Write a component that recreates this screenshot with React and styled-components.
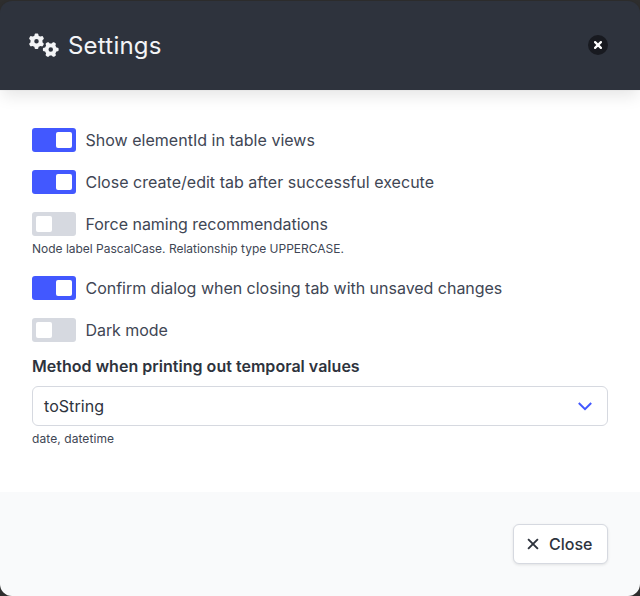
import React, { useState } from "react";
import styled, { createGlobalStyle } from "styled-components";
import { FaGears } from "react-icons/fa6";

const GlobalStyle = createGlobalStyle`
  *, *::before, *::after { box-sizing: border-box; }
  html { background: #2e2e2e; }
  body { margin: 0; font: 400 16px/24px Inter, sans-serif; color: #404654; }
  button { font: inherit; cursor: pointer; }
`;

const Dialog = styled.section`
  display: flex;
  flex-direction: column;
  width: 640px;
  height: 596px;
  padding-top: 1px;
  overflow: hidden;
`;

const Header = styled.header`
  display: flex;
  align-items: center;
  flex: 0 0 89px;
  padding: 0 32px 1px 29px;
  background: #2e333d;
  color: #f3f4f6;
  border-radius: 12px 12px 0 0;
  box-shadow: 0 8px 16px -2px rgba(10, 10, 10, 0.1), 0 0 0 1px rgba(10, 10, 10, 0.02);
  z-index: 1;
`;

const TitleIcon = styled.span`
  display: flex;
  margin-right: 9px;
  svg { width: 30px; height: 24px; }
`;

const Title = styled.h1`
  flex: 1;
  margin: 0;
  padding-top: 1px;
  font-size: 24px;
  font-weight: 400;
  line-height: 24px;
  letter-spacing: 0.22px;
`;

const Dismiss = styled.button`
  display: flex;
  align-items: center;
  justify-content: center;
  width: 20px;
  height: 20px;
  padding: 0;
  border: 0;
  border-radius: 50%;
  background: #181a20;
  color: #fff;
  svg { width: 8px; height: 8px; }
`;

const Body = styled.main`
  flex: 0 0 402px;
  padding: 38px 32px 0;
  background: #fff;
`;

const Option = styled.label`
  display: flex;
  align-items: center;
  gap: 9.5px;
  height: 24px;
  margin-bottom: ${(p) => (p.$tight ? "0" : "18px")};
  cursor: pointer;
`;

const Track = styled.button`
  display: flex;
  justify-content: ${(p) => (p.$on ? "flex-end" : "flex-start")};
  width: 44px;
  height: 24px;
  padding: 4px;
  border: 0;
  border-radius: 3px;
  background: ${(p) => (p.$on ? "#4258ff" : "#d6d9e0")};
`;

const Thumb = styled.span`
  width: 16px;
  height: 16px;
  border-radius: 2px;
  background: #fff;
`;

const OptionText = styled.span`
  letter-spacing: ${(p) => p.$spacing || "normal"};
`;

const Help = styled.p`
  margin: ${(p) => p.$margin};
  font-size: 12px;
  line-height: 18px;
  letter-spacing: ${(p) => p.$spacing || "normal"};
`;

const FieldLabel = styled.label`
  display: block;
  margin: -6px 0 8px;
  font-weight: 600;
  letter-spacing: 0.025px;
  color: #2e333d;
`;

const Select = styled.div`
  display: flex;
  align-items: center;
  justify-content: space-between;
  height: 40px;
  padding: 0 14px 0 11px;
  border: 1px solid #d6d9e0;
  border-radius: 6px;
  color: #2e333d;
`;

const Footer = styled.footer`
  display: flex;
  flex: 1;
  align-items: flex-start;
  justify-content: flex-end;
  padding: 32px;
  background: #f9fafb;
  border-radius: 0 0 12px 12px;
`;

const CloseButton = styled.button`
  display: flex;
  align-items: center;
  width: 95px;
  height: 40px;
  padding: 0 0 0 11px;
  border: 1px solid #d6d9e0;
  border-radius: 6px;
  background: #fff;
  color: #2e333d;
  font-weight: 500;
  box-shadow: 0 1px 3px rgba(10, 10, 10, 0.1);
  svg { width: 16px; height: 16px; margin-right: 8px; }
`;

const options = [
  { label: "Show elementId in table views", on: true, spacing: "0.02px" },
  { label: "Close create/edit tab after successful execute", on: true, spacing: "0.025px" },
  {
    label: "Force naming recommendations",
    on: false,
    spacing: "-0.03px",
    help: "Node label PascalCase. Relationship type UPPERCASE.",
  },
  {
    label: "Confirm dialog when closing tab with unsaved changes",
    on: true,
    spacing: "-0.025px",
  },
  { label: "Dark mode", on: false, spacing: "-0.06px" },
];

function Toggle({ label, on, help, spacing }) {
  const [active, setActive] = useState(on);
  return (
    <>
      <Option $tight={Boolean(help)}>
        <Track
          type="button"
          role="switch"
          aria-checked={active}
          $on={active}
          onClick={() => setActive(!active)}
        >
          <Thumb />
        </Track>
        <OptionText $spacing={spacing}>{label}</OptionText>
      </Option>
      {help && <Help $margin="4px 0 18px" $spacing="-0.015px">{help}</Help>}
    </>
  );
}

export default function App() {
  return (
    <>
      <GlobalStyle />
      <Dialog role="dialog">
        <Header>
          <TitleIcon><FaGears /></TitleIcon>
          <Title>Settings</Title>
          <Dismiss aria-label="close">
            <svg viewBox="0 0 8 8" fill="none" stroke="currentColor" strokeWidth="2.2" strokeLinecap="round">
              <path d="M1.1 1.1L6.9 6.9M6.9 1.1L1.1 6.9" />
            </svg>
          </Dismiss>
        </Header>
        <Body>
          {options.map((option) => (
            <Toggle key={option.label} {...option} />
          ))}
          <FieldLabel>Method when printing out temporal values</FieldLabel>
          <Select>
            <OptionText $spacing="0.06px">toString</OptionText>
            <svg width="16" height="16" viewBox="0 0 16 16" fill="none" stroke="#4258ff" strokeWidth="2">
              <path d="M1.8 5L8 11.2L14.2 5" />
            </svg>
          </Select>
          <Help $margin="4px 0 0" $spacing="0.08px">date, datetime</Help>
        </Body>
        <Footer>
          <CloseButton>
            <svg viewBox="0 0 16 16" fill="none" stroke="currentColor" strokeWidth="1.9">
              <path d="M3.1 3.1L12.9 12.9M12.9 3.1L3.1 12.9" />
            </svg>
            Close
          </CloseButton>
        </Footer>
      </Dialog>
    </>
  );
}
